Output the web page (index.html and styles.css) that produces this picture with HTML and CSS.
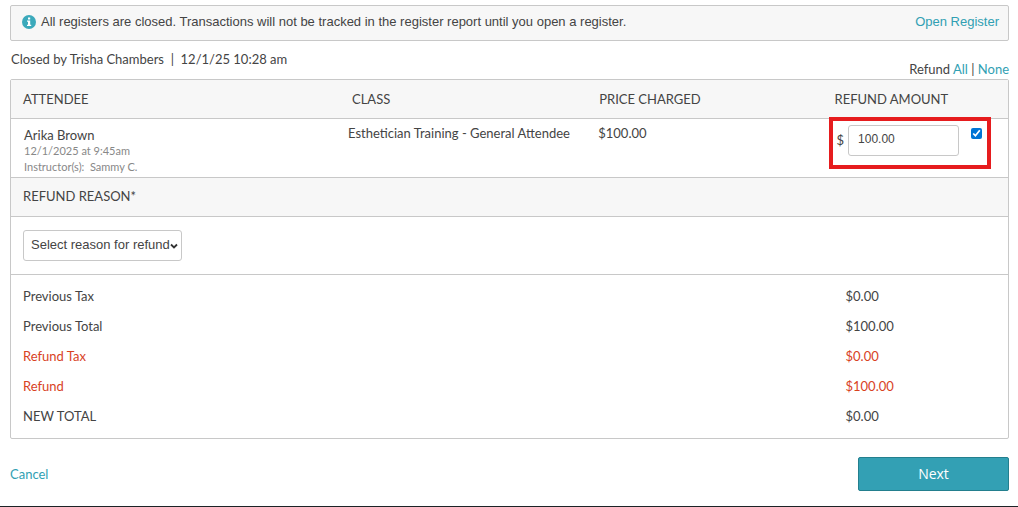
FILE: index.html
```html
<!DOCTYPE html>
<html lang="en">
<head>
<meta charset="utf-8">
<title>Refund</title>
<meta name="viewport" content="width=device-width, initial-scale=1">
<link rel="stylesheet" href="styles.css">
</head>
<body>
<main class="page">
  <div class="notice">
    <svg class="notice-icon" viewBox="0 0 14 14" aria-hidden="true"><circle cx="7" cy="7" r="7" fill="#3ba9bb"/><path d="M6 2.4h2.2v2H6zM5 5.6h3.2v4.2h1V11H5V9.800h1V6.800H5z" fill="#fff"/></svg>
    <p class="notice-text">All registers are closed. Transactions will not be tracked in the register report until you open a register.</p>
    <a class="link" href="#register">Open Register</a>
  </div>

  <div class="meta">
    <p class="closed">Closed by Trisha Chambers &nbsp;|&nbsp; 12/1/25 10:28 am</p>
    <p class="toggle">Refund <a class="link" href="#all">All</a> | <a class="link" href="#none">None</a></p>
  </div>

  <form class="panel" id="refund">
    <table class="items">
      <thead>
        <tr>
          <th class="col-attendee">ATTENDEE</th>
          <th class="col-class">CLASS</th>
          <th class="col-price">PRICE CHARGED</th>
          <th class="col-amount">REFUND AMOUNT</th>
        </tr>
      </thead>
      <tbody>
        <tr>
          <td class="col-attendee">
            <div class="name">Arika Brown</div>
            <div class="detail">12/1/2025 at 9:45am</div>
            <div class="detail">Instructor(s): &nbsp;Sammy C.</div>
          </td>
          <td>Esthetician Training - General Attendee</td>
          <td>$100.00</td>
          <td class="amount-cell">
            <div class="amount">
              <label for="amount">$</label>
              <input class="amount-input" id="amount" type="text" value="100.00">
              <input class="amount-check" type="checkbox" aria-label="Refund this item" checked>
            </div>
          </td>
        </tr>
      </tbody>
    </table>

    <label class="section-head" for="reason">REFUND REASON*</label>
    <div class="reason">
      <div class="select-wrap">
        <select class="select" id="reason"><option>Select reason for refund</option></select>
        <svg class="chevron" viewBox="0 0 8 6" aria-hidden="true"><path d="M1 1.500l3 3 3-3" fill="none" stroke="#333" stroke-width="1.800"/></svg>
      </div>
    </div>

    <table class="totals">
      <tr><th>Previous Tax</th><td>$0.00</td></tr>
      <tr><th>Previous Total</th><td>$100.00</td></tr>
      <tr class="refund"><th>Refund Tax</th><td>$0.00</td></tr>
      <tr class="refund"><th>Refund</th><td>$100.00</td></tr>
      <tr><th>NEW TOTAL</th><td>$0.00</td></tr>
    </table>
  </form>

  <div class="actions">
    <a class="link" href="#cancel">Cancel</a>
    <button class="next" type="submit" form="refund">Next</button>
  </div>
</main>
</body>
</html>
```
FILE: styles.css
```css
*, *::after { box-sizing: border-box; }

body {
  margin: 0;
  background: #fff;
  color: #444;
  font: 13px/16px Lato, "Open Sans", sans-serif;
}

p { margin: 0; }

.page {
  padding: 5px 9px 15px 10px;
  border-bottom: 1px solid #1c2326;
}

.link { color: #31a0b3; text-decoration: none; }

.notice {
  display: flex;
  align-items: center;
  gap: 5px;
  height: 36px;
  padding: 0 9px 2px 11px;
  border: 1px solid #c8c8c8;
  border-radius: 2px;
  background: #f7f7f7;
  font: 13px/16px "Liberation Sans", Arial, sans-serif;
}
.notice-icon { width: 14px; height: 14px; }
.notice-text { flex: 1; }

.meta {
  display: flex;
  justify-content: space-between;
  padding-top: 10px;
  height: 38px;
}
.closed { padding-left: 1px; }
.toggle { align-self: flex-end; padding-bottom: 2px; }

.panel {
  border: 1px solid #c8c8c8;
  border-radius: 2px;
}

.items, .totals {
  width: 100%;
  table-layout: fixed;
  border-collapse: collapse;
}
th { font-weight: 400; text-align: left; }

.items th {
  height: 38px;
  padding: 0;
  background: #f7f7f7;
  border-bottom: 1px solid #c8c8c8;
}
.items td { height: 59px; padding: 6px 0 0; vertical-align: top; }
.items .col-attendee { width: 33.8%; padding-left: 12px; }
.items td.col-attendee { padding: 8px 0 0 13px; }
.items .col-class { width: 25.1%; padding-left: 4px; }
.items .col-price { width: 23.1%; padding-left: 1px; }
.items .col-amount { padding-left: 6px; }

.detail { color: #888; font-size: 11px; }

.items .amount-cell { position: relative; padding: 6px 0 0 8px; }
.amount-cell::after {
  content: "";
  position: absolute;
  top: -2px;
  left: 0;
  width: 162px;
  height: 52px;
  border: 4px solid #e61c1e;
  pointer-events: none;
}
.amount { display: flex; align-items: center; gap: 4px; }
.amount-input {
  width: 111px;
  height: 31px;
  padding: 0 9px 2px;
  border: 1px solid #c8c8c8;
  border-radius: 3px;
  color: #444;
  font: 12px "Liberation Sans", Arial, sans-serif;
}
.amount-check {
  align-self: flex-start;
  width: 11px;
  height: 11px;
  margin: 3px 0 0 8px;
  accent-color: #0075d5;
}

.section-head {
  display: block;
  padding: 10px 12px 12px;
  background: #f7f7f7;
  border: solid #c8c8c8;
  border-width: 1px 0;
}

.reason { padding: 13px 12px; border-bottom: 1px solid #c8c8c8; }
.select-wrap { position: relative; width: 159px; }
.select {
  display: block;
  width: 100%;
  height: 31px;
  padding: 0 7px 3px;
  appearance: none;
  border: 1px solid #c8c8c8;
  border-radius: 3px;
  background: #fff;
  color: #444;
  font: 13px "Liberation Sans", Arial, sans-serif;
}
.chevron {
  position: absolute;
  top: 13px;
  right: 4px;
  width: 8px;
  height: 6px;
  pointer-events: none;
}

.totals { margin: 6px 0 7px; }
.totals th { width: 83.7%; height: 30px; padding: 0 0 0 12px; }
.totals td { padding: 0; }
.totals .refund { color: #d8421f; }

.actions {
  display: flex;
  align-items: center;
  justify-content: space-between;
  padding-top: 18px;
}
.next {
  width: 151px;
  height: 34px;
  padding: 0 0 2px;
  border: 1px solid #237f8e;
  border-radius: 2px;
  background: #33a0b4;
  color: #fff;
  font: 14px "Open Sans", sans-serif;
}
```
